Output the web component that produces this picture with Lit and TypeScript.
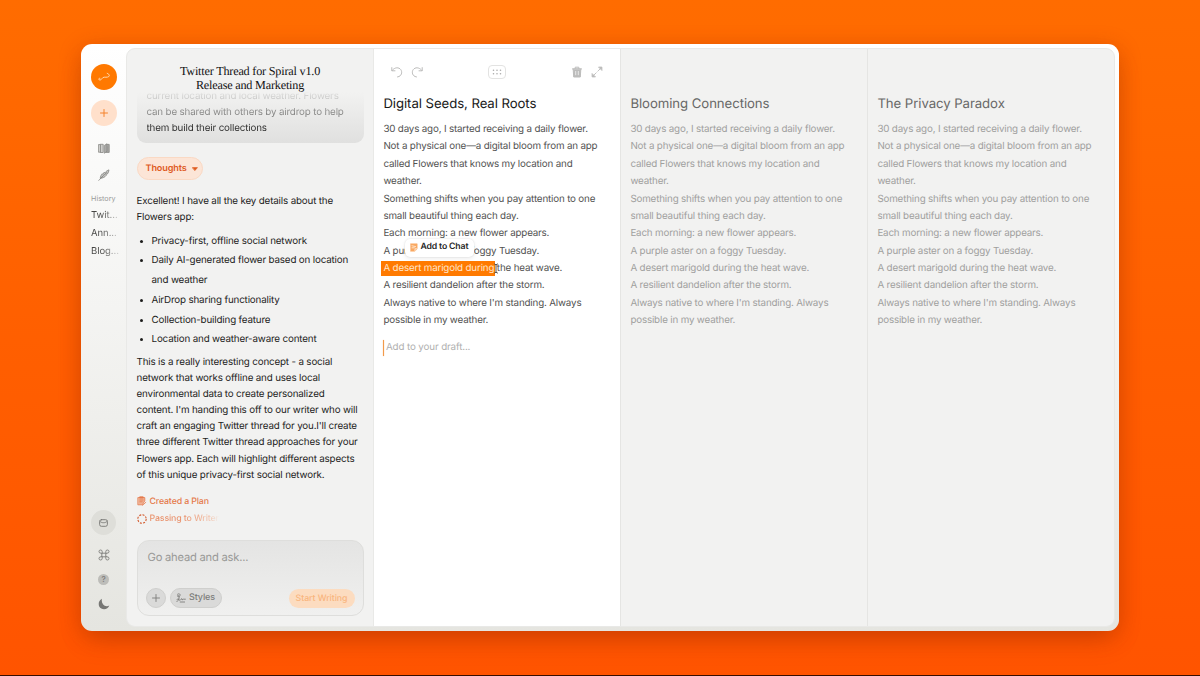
import { LitElement, html, svg, css } from "lit";
import { customElement, property } from "lit/decorators.js";

const lines = (rows: string[]) => rows.map((r) => html`<div class="line">${r}</div>`);

const DRAFT = [
  "30 days ago, I started receiving a daily flower.",
  "Not a physical one—a digital bloom from an app",
  "called Flowers that knows my location and",
  "weather.",
  "Something shifts when you pay attention to one",
  "small beautiful thing each day.",
  "Each morning: a new flower appears.",
  "A purple aster on a foggy Tuesday.",
  "A desert marigold during the heat wave.",
  "A resilient dandelion after the storm.",
  "Always native to where I'm standing. Always",
  "possible in my weather.",
];

const base = css`
  * { box-sizing: border-box; }
  svg { display: block; fill: none; stroke: currentColor; stroke-linecap: round; stroke-linejoin: round; flex: none; }
  .line { white-space: nowrap; }
`;

@customElement("side-bar")
class SideBar extends LitElement {
  static styles = [base, css`
    :host { display: flex; flex-direction: column; align-items: center; width: 45px; flex: none; color: #868683; padding-top: 15.5px; }
    .logo, .new, .mail { border-radius: 50%; display: grid; place-items: center; flex: none; }
    .logo { width: 26px; height: 26px; background: #ff7900; color: #ffd9ae; }
    .new { width: 26px; height: 26px; background: #ffe0cb; color: #f5822b; margin-top: 10px; }
    .book { margin-top: 17px; }
    .quill { margin-top: 15.5px; }
    .history { align-self: stretch; padding-left: 10px; margin-top: 12.5px; font-size: 7.2px; line-height: 10px; color: #9a9a98; letter-spacing: 0.05px; }
    .items { align-self: stretch; padding-left: 10px; margin-top: 3.5px; font-size: 9.5px; line-height: 18px; letter-spacing: -0.05px;
      color: transparent; background: linear-gradient(90deg, #454543 18px, #5d5d5b 24px, #c8c8c6 36px); background-clip: text; -webkit-background-clip: text; }
    .foot { margin-top: auto; display: flex; flex-direction: column; align-items: center; padding-bottom: 16.5px; }
    .mail { width: 25px; height: 25px; background: #deded9; color: #777774; }
    .cmd { margin-top: 13.5px; }
    .help { margin-top: 13.5px; width: 11px; height: 11px; border-radius: 50%; background: #bdbdb9; color: #7c7c79; font-size: 8px; line-height: 11px; text-align: center; font-weight: 500; }
    .moon { margin-top: 13px; }
  `];
  render() {
    return html`
      <div class="logo"><svg width="14" height="10" viewBox="0 0 14 10" stroke-width="1"><path d="M2.900 6.200C1.300 5.900 1.200 8.300 3.200 8C5 7.700 5 5.300 7.200 5.200C9.500 5.200 12 5.400 12.300 3.700C12.400 2.600 11.300 1.700 10.200 1.300"/></svg></div>
      <div class="new"><svg width="8" height="8" viewBox="0 0 8 8" stroke-width="1"><path d="M4 .5v7M.5 4h7"/></svg></div>
      <svg class="book" width="12" height="11" viewBox="0 0 12 11" stroke-width=".8"><path d="M.8 1.600h1.700v7.600H.8zM2.500 1.300h2.700v8.200H2.500" fill="#cfcfcd"/><path d="M6.700 2.200L9 .8v7.600L6.700 10zM9.300 1.400h1.900v8H8.300" fill="#a9a9a7"/></svg>
      <svg class="quill" width="12" height="12" viewBox="0 0 12 12" stroke-width=".8"><path d="M.8 11.400L4.500 7.500M3 6.600L4.300 4.700L4.800 5.400L6.400 3L7 3.700C8 2.300 9.500 1.300 11 .9C10.800 2.400 10.300 3.800 9.400 5L8 5.100L8.300 6.300C6.700 8.300 5 9.100 2.600 9.200z" fill="#c4c4c2"/><path d="M2.500 9.600L8.500 3.500"/></svg>
      <div class="history">History</div>
      <div class="items">${lines(["Twit...", "Ann...", "Blog..."])}</div>
      <div class="foot">
        <div class="mail"><svg width="9" height="8" viewBox="0 0 9 8" stroke-width=".9"><rect x=".6" y=".7" width="7.800" height="6.600" rx="1.800"/><path d="M.9 2.300C2 3.500 3.200 3.700 4.500 3.700S7 3.500 8.100 2.300"/></svg></div>
        <svg class="cmd" width="12" height="12" viewBox="0 0 12 12" stroke-width="1"><path d="M4.200 4.200h3.600v3.600H4.200zM4.200 4.200V2.600A1.600 1.600 0 1 0 2.600 4.200zM7.800 4.200V2.600A1.600 1.600 0 1 1 9.400 4.200zM4.200 7.800V9.400A1.600 1.600 0 1 1 2.600 7.800zM7.800 7.800V9.400A1.600 1.600 0 1 0 9.400 7.800z"/></svg>
        <div class="help">?</div>
        <svg class="moon" width="12" height="12" viewBox="0 0 12 12"><path d="M4 .8C-.2 2.600-.3 8.600 3.300 10.600C6.500 12.200 10.300 10.700 11.300 7.600C8.800 8.700 6.300 8 5 6.200C3.800 4.500 3.500 2.600 4 .8z" fill="#777774" stroke="none"/></svg>
      </div>`;
  }
}

@customElement("chat-panel")
class ChatPanel extends LitElement {
  static styles = [base, css`
    :host { display: flex; flex-direction: column; width: 247px; flex: none; padding: 0 9.5px 9.5px 9.5px; color: #1d1d1c; font-size: 9.8px; letter-spacing: -0.16px; line-height: 16.07px; border-right: 1px solid #e9e9e7; }
    .title { text-align: center; font-family: "Liberation Serif", serif; font-size: 12.2px; line-height: 14.6px; padding-top: 14.5px; color: #111; letter-spacing: -0.2px; height: 44px; flex: none; }
    .title .line { position: relative; z-index: 1; }
    .bubble { height: 51px; padding: 0 10px; margin-top: -1px; border-radius: 0 0 9px 9px; background: linear-gradient(#f2f2f100, #e0e0df); }
    .bubble .line { position: relative; top: -3px; color: transparent; background: linear-gradient(#f2f2f1 3px, #d4d4d3 6px, #b4b4b3); background-clip: text; -webkit-background-clip: text; }
    .bubble .line:nth-child(2) { background-image: linear-gradient(#a0a09f, #6d6d6c); }
    .bubble .line:nth-child(3) { background-image: linear-gradient(#3a3a39, #1c1c1b); }
    .thoughts { display: flex; align-items: center; gap: 5px; align-self: flex-start; height: 23px; width: 66px; padding-left: 8px; margin-top: 14px; border: 1px solid #fad9c4; border-radius: 12px; background: #fce5d7; color: #df5a1e; font-weight: 600; font-size: 9.1px; line-height: 22px; letter-spacing: -0.12px; }
    .intro { margin-top: 14px; }
    ul { margin: 5.5px 0 5px; padding: 0 0 0 15px; line-height: 19.75px; }
    li::marker { font-size: 9px; }
    .tasks { margin-top: 9px; color: #e57a4c; font-size: 8.8px; font-weight: 500; line-height: 17.5px; letter-spacing: -0.14px; }
    .task { display: flex; align-items: center; gap: 3px; white-space: nowrap; }
    .fade { color: transparent; background: linear-gradient(90deg, #e9906a 32px, #f2c7b2 60px, #f2f2f1 70px); background-clip: text; -webkit-background-clip: text; }
    .ask { margin-top: auto; height: 76px; flex: none; border: 1px solid #dededc; border-radius: 12px; background: linear-gradient(#e4e4e3, #f0f0ef); padding: 8px 8px 7px; display: flex; flex-direction: column; }
    .hint { font-size: 11.2px; letter-spacing: -0.22px; line-height: 17px; color: #999997; padding-left: 2px; }
    .row { margin-top: auto; display: flex; gap: 4px; align-items: center; }
    .plus, .styles { height: 20px; border: 1px solid #cfcfcd; background: #dadad9; border-radius: 10px; color: #7d7d7b; display: flex; align-items: center; justify-content: center; }
    .plus { width: 20px; }
    .styles { width: 52px; gap: 3px; font-size: 9px; line-height: 18px; font-weight: 500; letter-spacing: -0.1px; }
    .start { margin-left: auto; width: 66px; height: 19px; border-radius: 10px; background: #fcdcc0; color: #f9b57e; font-size: 8.8px; letter-spacing: -0.08px; font-weight: 500; line-height: 19px; text-align: center; }
  `];
  render() {
    return html`
      <div class="title">${lines(["Twitter Thread for Spiral v1.0", "Release and Marketing"])}</div>
      <div class="bubble">${lines(["current location and local weather. Flowers", "can be shared with others by airdrop to help", "them build their collections"])}</div>
      <div class="thoughts">Thoughts<svg width="6" height="4" viewBox="0 0 6 4" stroke-width=".6"><path d="M.5.6h5L3 3.400z" fill="currentColor"/></svg></div>
      <div class="intro">${lines(["Excellent! I have all the key details about the", "Flowers app:"])}</div>
      <ul>
        <li>Privacy-first, offline social network</li>
        <li>${lines(["Daily AI-generated flower based on location", "and weather"])}</li>
        <li>AirDrop sharing functionality</li>
        <li>Collection-building feature</li>
        <li>Location and weather-aware content</li>
      </ul>
      <div class="body">${lines([
        "This is a really interesting concept - a social",
        "network that works offline and uses local",
        "environmental data to create personalized",
        "content. I'm handing this off to our writer who will",
        "craft an engaging Twitter thread for you.I'll create",
        "three different Twitter thread approaches for your",
        "Flowers app. Each will highlight different aspects",
        "of this unique privacy-first social network.",
      ])}</div>
      <div class="tasks">
        <div class="task"><svg width="10" height="10" viewBox="0 0 10 10" stroke-width=".8"><path d="M1.200 1.600h6.600v3.200L5.400 8.800H1.200z" fill="#f1b396"/><path d="M3 .8h3.200v1.200H3z" fill="#e57a4c"/><path d="M2.800 4h3.400M2.800 5.800h2.400M5.600 9.300L8.800 6.300"/></svg><span>Created a Plan</span></div>
        <div class="task"><svg width="10" height="10" viewBox="0 0 10 10" stroke-width="1.100"><circle cx="5" cy="5" r="4.200" stroke="#d2592b" stroke-dasharray="2 1.298" stroke-linecap="butt"/></svg><span class="fade">Passing to Writer</span></div>
      </div>
      <div class="ask">
        <div class="hint">Go ahead and ask...</div>
        <div class="row">
          <div class="plus"><svg width="8" height="8" viewBox="0 0 8 8" stroke-width=".9"><path d="M4 .5v7M.5 4h7"/></svg></div>
          <div class="styles"><svg width="10" height="10" viewBox="0 0 10 10" stroke-width=".9"><path d="M1.600 1.200C3.200.2 4.400 1 4 2.400C3.600 3.900 2 4.400 1.500 3.200C1.200 2.300 2.400 2 3 3.200C3.700 4.800 2.800 7 .9 8.700M1 6.400C2.400 5.600 3.600 6 3.500 7.200M4.500 6.800L5.800 5.600L6 6.900L7.400 6.200H9.400M4.200 9h4.400"/></svg>Styles</div>
          <div class="start">Start Writing</div>
        </div>
      </div>`;
  }
}

@customElement("draft-column")
class DraftColumn extends LitElement {
  @property() heading = "";
  @property({ type: Boolean, reflect: true }) active = false;
  static styles = [base, css`
    :host { display: block; width: 247px; flex: none; padding: 15.5px 10px 0 9.4px; color: #a0a09e; border-right: 1px solid #e5e5e3; }
    :host(:last-child) { border-right: none; }
    :host([active]) { background: #fff; color: #525251; }
    .tools { height: 14px; display: grid; grid-template-columns: 1fr auto 1fr; align-items: center; padding: 0 7px 0 8px; color: #bcbcbb; }
    .pair { display: flex; gap: 8px; align-items: center; }
    .pair.end { justify-content: flex-end; }
    .grip { width: 18px; height: 14px; border: 1px solid #e3e3e2; border-radius: 4px; display: grid; place-items: center; color: #aaa; }
    h2 { margin: 16px 0 8.5px; font-size: 13.2px; letter-spacing: -0.07px; line-height: 18px; font-weight: 400; color: #686867; white-space: nowrap; }
    :host([active]) h2 { color: #181818; }
    .text { font-size: 9.8px; letter-spacing: -0.172px; line-height: 17.37px; }
    .sel { display: inline-block; height: 15px; line-height: 15px; background: #ff7a00; color: #ffe6cb; padding: 0 1px 0 2px; margin-left: -2px; margin-right: -1px; }
    .anchor { position: relative; }
    .pop { position: absolute; left: 21.5px; top: -4px; width: 69px; height: 18px; border-radius: 5px; background: #fff; box-shadow: 0 0 2px #0002, 0 2px 5px #0001; display: flex; align-items: center; gap: 2.5px; padding-left: 5px; font-size: 8.7px; line-height: 19px; letter-spacing: -0.14px; font-weight: 600; color: #252525; }
    .caret { position: absolute; left: 110px; top: 3px; width: 6px; height: 11px; }
    .add { display: flex; align-items: center; gap: 1.5px; margin-top: 9.5px; font-size: 9.8px; letter-spacing: -0.12px; line-height: 17px; color: #b0b0af; }
    .add i { width: 1px; height: 16px; background: #f29a4a; box-shadow: 0 0 1px #f29a4a; }
  `];
  render() {
    const icons = html`
      <div class="pair">
        <svg width="12" height="12" viewBox="0 0 12 12" stroke-width="1"><path d="M.8 1.600v3.200h3.200M1 4.600C3 1.800 6.500.9 9 2.800C11.500 4.800 11.200 9 8 10.500L6.500 10.900"/></svg>
        <svg width="12" height="12" viewBox="0 0 12 12" stroke-width="1"><path d="M11.200 1.600v3.200h-3.200M11 4.600C9 1.800 5.500.9 3 2.800C.5 4.800.8 9 4 10.500L5.500 10.900"/></svg>
      </div>
      <div class="grip"><svg width="10" height="6" viewBox="0 0 10 6" stroke-width="1.600"><path d="M1.500 1.200h0M5 1.200h0M8.500 1.200h0M1.500 4.800h0M5 4.800h0M8.500 4.800h0"/></svg></div>
      <div class="pair end">
        <svg width="12" height="12" viewBox="0 0 12 12" stroke-width="1"><path d="M1.400 2.900h9.200M4.200 2.500V1.200h3.600v1.300"/><path d="M2.200 3.400l.5 7.600h6.600l.5-7.600z" fill="#bcbcbb"/><path d="M4.700 5.400v3.400M7.300 5.400v3.400" stroke="#f2f2f2" stroke-width=".8"/></svg>
        <svg width="12" height="12" viewBox="0 0 12 12" stroke-width=".9"><path d="M6.800 5.200L9.800 2.200M5.200 6.800L2.200 9.800"/><path d="M7.900 1.100h3v3zM1.100 7.900v3h3z" fill="#bcbcbb"/></svg>
      </div>`;
    const caret = svg`<path d="M1.500 1L3 1.800L4.500 1M3 1.800V9.200M1.500 10L3 9.200L4.500 10"/>`;
    return html`
      <div class="tools">${this.active ? icons : ""}</div>
      <h2>${this.heading}</h2>
      <div class="text">${this.active
        ? html`${lines(DRAFT.slice(0, 7))}
          <div class="line anchor">${DRAFT[7]}<div class="pop"><svg width="8" height="9" viewBox="0 0 8 9" stroke-width=".5" stroke="#f4a15e"><path d="M.6.8h6.600v5L5 8.200H.6z" fill="#f9a862" stroke="#f9a862"/><path d="M2 2.800l3.600.8M2 4.800h2.400M5 8V5.800h2" stroke="#fff3e4" stroke-width=".8"/></svg>Add to Chat</div></div>
          <div class="line anchor"><span class="sel">A desert marigold during</span> the heat wave.<svg class="caret" viewBox="0 0 6 11" stroke="#333" stroke-width="1">${caret}</svg></div>
          ${lines(DRAFT.slice(9))}`
        : lines(DRAFT)}</div>
      ${this.active ? html`<div class="add"><i></i>Add to your draft...</div>` : ""}`;
  }
}

@customElement("app-root")
class AppRoot extends LitElement {
  static styles = [base, css`
    :host { display: flex; width: 1200px; height: 676px; padding: 44px 81px 44px; overflow: hidden; border-bottom: 1px solid #3a0f00; box-sizing: border-box; text-rendering: geometricPrecision;
      background: linear-gradient(#ff6c00, #ff5f00 50%, #ff5400); font-family: Inter, "Liberation Sans", sans-serif; }
    .window { display: flex; width: 1038px; height: 587px; padding: 4px 4.5px 4.5px 0; border-radius: 11px; background: linear-gradient(#fff, #f4f4f2 45%, #e5e5e0); box-shadow: 0 4px 22px #a02c0055, 0 14px 28px -8px #a02c0055; }
    .sheet { display: flex; flex: 1; border: 1px solid #e9e9e7; border-radius: 9px; background: #f2f2f1; overflow: hidden; }
  `];
  render() {
    return html`<div class="window">
      <side-bar></side-bar>
      <div class="sheet">
        <chat-panel></chat-panel>
        <draft-column active heading="Digital Seeds, Real Roots"></draft-column>
        <draft-column heading="Blooming Connections"></draft-column>
        <draft-column heading="The Privacy Paradox"></draft-column>
      </div>
    </div>`;
  }
}
